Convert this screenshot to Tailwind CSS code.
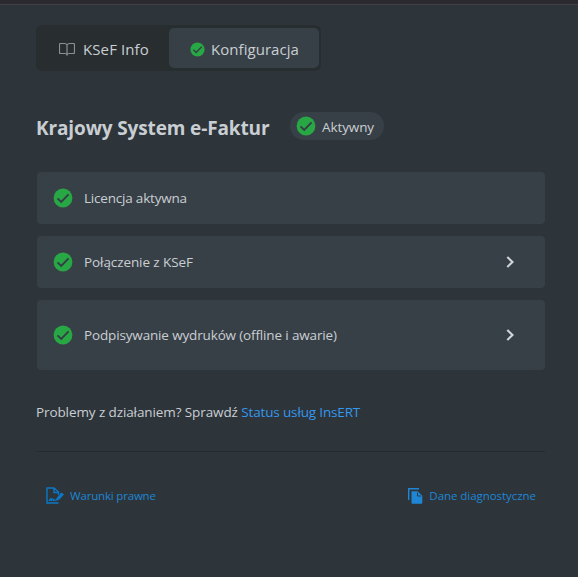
<!DOCTYPE html>
<html lang="pl">
<head>
<meta charset="utf-8">
<title>Krajowy System e-Faktur</title>
<script src="https://cdn.jsdelivr.net/npm/@tailwindcss/browser@4"></script>
</head>
<body class="h-[577px] overflow-hidden bg-[#2d343a] font-['Open_Sans','Noto_Sans',sans-serif] text-[#c9ced3]">
<svg class="hidden">
  <symbol id="check" viewBox="0 0 20 20"><circle cx="10" cy="10" r="9.4" fill="#28a745"/><path d="M4.5 10.3 8.2 14 15.6 6.4" fill="none" stroke="#343d45" stroke-width="1.8"/></symbol>
  <symbol id="chevron" viewBox="0 0 8 12"><path d="M1.300 1 6.500 6 1.300 11" fill="none" stroke="#d0d5d9" stroke-width="2.1"/></symbol>
</svg>
<div class="h-[5px] border-b border-[#414044] bg-[#2b2a30]"></div>
<main class="ml-9 w-[509px] pt-5">
  <nav class="flex h-[46px] w-[285px] items-center rounded-md bg-[#282d2f] pr-0.5 text-[15px]">
    <div class="flex w-[133px] items-center pl-[23px]">
      <svg class="mr-2 mt-0.5 h-[14px] w-4 shrink-0" viewBox="0 0 16 14" fill="none" stroke="#8a8f92" stroke-width="1.200"><path d="M8 3C7.400 1.800 6.500 1.500 5.500 1.500H1.500q-1 0-1 1v8q0 1 1 1H6c1 0 1.700.4 2 1.300.3-.9 1-1.300 2-1.300h4.500q1 0 1-1v-8q0-1-1-1h-4C9.500 1.500 8.600 1.800 8 3v9.500"/></svg>
      <span class="whitespace-nowrap pt-0.5 tracking-[0.1px]">KSeF Info</span>
    </div>
    <div class="flex h-10 w-[150px] items-center rounded-[5px] bg-[#384047] pl-[21px]">
      <svg class="mr-1.5 mt-0.5 size-[15px] shrink-0"><use href="#check"/></svg>
      <span class="whitespace-nowrap pt-0.5 tracking-[0.05px]">Konfiguracja</span>
    </div>
  </nav>
  <header class="mt-[41px] flex h-7 items-center">
    <h1 class="w-[254px] whitespace-nowrap pt-1 text-[19px] font-bold leading-6 tracking-[-0.13px]">Krajowy System e-Faktur</h1>
    <div class="flex h-7 w-[94px] items-center rounded-full bg-[#384047] pl-1.5">
      <svg class="mr-1.5 size-5 shrink-0"><use href="#check"/></svg>
      <span class="whitespace-nowrap pt-[3px] text-[13.500px] tracking-[-0.1px]">Aktywny</span>
    </div>
  </header>
  <section class="ml-px mt-8 flex flex-col gap-3 text-[13.500px]">
    <div class="flex h-[52px] items-center rounded bg-[#384047] px-4">
      <svg class="mr-[11px] size-5 shrink-0"><use href="#check"/></svg><span class="tracking-[-0.2px]">Licencja aktywna</span>
    </div>
    <div class="flex h-[52px] items-center rounded bg-[#384047] pl-4 pr-[31px]">
      <svg class="mr-[11px] size-5 shrink-0"><use href="#check"/></svg><span class="flex-1 tracking-[-0.09px]">Połączenie z KSeF</span><svg class="h-3 w-2"><use href="#chevron"/></svg>
    </div>
    <div class="flex h-[70px] items-center rounded bg-[#384047] pl-4 pr-[31px]">
      <svg class="mr-[11px] size-5 shrink-0"><use href="#check"/></svg><span class="flex-1 tracking-[-0.15px]">Podpisywanie wydruków (offline i awarie)</span><svg class="h-3 w-2"><use href="#chevron"/></svg>
    </div>
  </section>
  <p class="mt-8 h-5 whitespace-nowrap text-[13.500px] leading-5 tracking-[-0.1px]">Problemy z działaniem? Sprawdź <a class="tracking-[-0.15px] text-[#3498ee]">Status usług InsERT</a></p>
  <hr class="mt-[29px] border-t border-[#262b2f]">
  <footer class="mt-[34px] flex h-5 items-center justify-between pl-2.5 pr-[9px] text-[11.500px] text-[#1e86d5]">
    <a class="flex items-center"><svg class="mr-[5px] h-[18px] w-[19px]" viewBox="0 0 19 18" fill="none" stroke="#0b78c6"><path d="M12.500 16H1V1h7l4.500 4v3M8 1v4.500h4" stroke-width="1.400"/><path d="M3 14c1.500-3 2.500-3 2 0 1.500-3 2.500-2.500 2.500-.5l3-.5 5-6" stroke-width="1.300"/><path d="m10.500 13 1-2.500 4-4.500 2 1.500-4 4.500z" fill="#0b78c6"/></svg><span class="tracking-[-0.18px]">Warunki prawne</span></a>
    <a class="flex items-center"><svg class="mr-1.5 h-4 w-[15px]" viewBox="0 0 15 16"><path d="M.7 12V.8h10.300" fill="none" stroke="#1e86d5" stroke-width="1.400"/><path d="M3.500 3.200h6.200l4.600 4.500v7.100q0 1-1 1H4.500q-1 0-1-1z" fill="#1e86d5"/><path d="M9.500 4.500v3.500h3.500" fill="none" stroke="#2d343a" stroke-width=".9"/></svg><span class="tracking-[-0.05px]">Dane diagnostyczne</span></a>
  </footer>
</main>
</body>
</html>
